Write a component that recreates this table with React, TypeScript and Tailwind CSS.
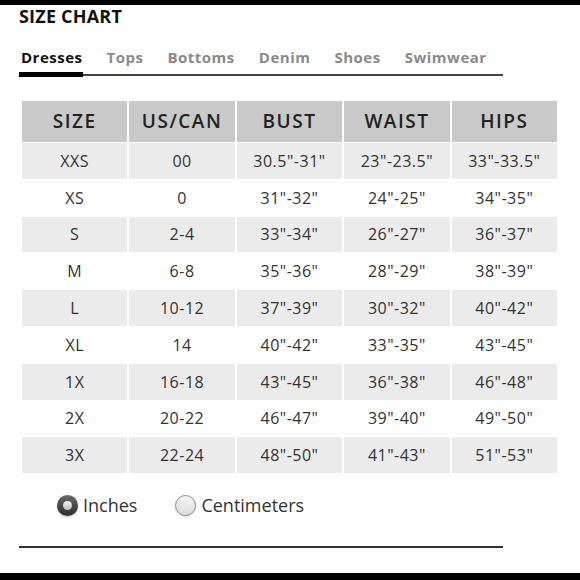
import React from 'react';

const headers = ['SIZE', 'US/CAN', 'BUST', 'WAIST', 'HIPS'];

const rows = [
  ['XXS', '00', '30.5"-31"', '23"-23.5"', '33"-33.5"'],
  ['XS', '0', '31"-32"', '24"-25"', '34"-35"'],
  ['S', '2-4', '33"-34"', '26"-27"', '36"-37"'],
  ['M', '6-8', '35"-36"', '28"-29"', '38"-39"'],
  ['L', '10-12', '37"-39"', '30"-32"', '40"-42"'],
  ['XL', '14', '40"-42"', '33"-35"', '43"-45"'],
  ['1X', '16-18', '43"-45"', '36"-38"', '46"-48"'],
  ['2X', '20-22', '46"-47"', '39"-40"', '49"-50"'],
  ['3X', '22-24', '48"-50"', '41"-43"', '51"-53"'],
];

const tabs = ['Dresses', 'Tops', 'Bottoms', 'Denim', 'Shoes', 'Swimwear'];

const Radio = ({ checked, label }: { checked: boolean; label: string }) => (
  <label className="flex items-center gap-[5px]">
    {checked ? (
      <span className="w-[21px] h-[21px] rounded-full bg-gradient-to-b from-[#6a6a6a] to-[#2e2e2e] flex items-center justify-center shadow-[0_1px_2px_rgba(0,0,0,0.3)]">
        <span className="w-[9px] h-[9px] rounded-full bg-gradient-to-b from-[#f4f4f4] to-[#bdbdbd]" />
      </span>
    ) : (
      <span className="w-[21px] h-[21px] rounded-full border border-[#8a8a8a] bg-gradient-to-b from-[#f6f6f6] to-[#dcdcdc] shadow-[0_1px_2px_rgba(0,0,0,0.15)]" />
    )}
    <span className="text-[18px] text-[#333]">{label}</span>
  </label>
);

export default function App() {
  return (
    <div className="w-[580px] h-[580px] bg-white flex flex-col font-['Open_Sans',sans-serif]">
      <div className="h-[5px] bg-black" />

      <div className="px-[19px]">
        <h1 className="text-[18px] leading-[22px] font-bold text-[#111] tracking-[0.2px]">SIZE CHART</h1>

        {/* Tabs */}
        <div className="mt-[20px] w-[484px]">
          <div className="flex gap-[24px] pl-[2px] text-[15px] leading-[20px] font-bold tracking-[0.5px]">
            {tabs.map((t, i) => (
              <span key={t} className={i === 0 ? 'text-[#111]' : 'text-[#8a8a8a]'}>{t}</span>
            ))}
          </div>
          <div className="flex items-center mt-[5px]">
            <div className="w-[64px] h-[5px] bg-black" />
            <div className="flex-1 h-[2px] bg-[#444]" />
          </div>
        </div>
      </div>

      {/* Table */}
      <div className="ml-[22px] mt-[24px] w-[535px] grid grid-cols-5 gap-x-[2px] gap-y-[1px]">
        {headers.map((h) => (
          <div key={h} className="h-[41px] bg-[#c9c9c9] flex items-center justify-center text-[19px] font-semibold text-[#222] tracking-[1.5px]">
            {h}
          </div>
        ))}
        {rows.map((r, ri) =>
          r.map((c, ci) => (
            <div
              key={`${ri}-${ci}`}
              className={`h-[35.8px] flex items-center justify-center text-[16px] text-[#333] tracking-[0.5px] ${ri % 2 === 0 ? 'bg-[#ebebeb]' : 'bg-white'}`}
            >
              {c}
            </div>
          ))
        )}
      </div>

      {/* Units */}
      <div className="flex items-center gap-[38px] pl-[57px] mt-[19px]">
        <Radio checked label="Inches" />
        <Radio checked={false} label="Centimeters" />
      </div>

      <div className="ml-[19px] mt-[27px] w-[484px] h-[2px] bg-[#333]" />

      <div className="flex-1" />
      <div className="h-[7px] bg-black" />
    </div>
  );
}
